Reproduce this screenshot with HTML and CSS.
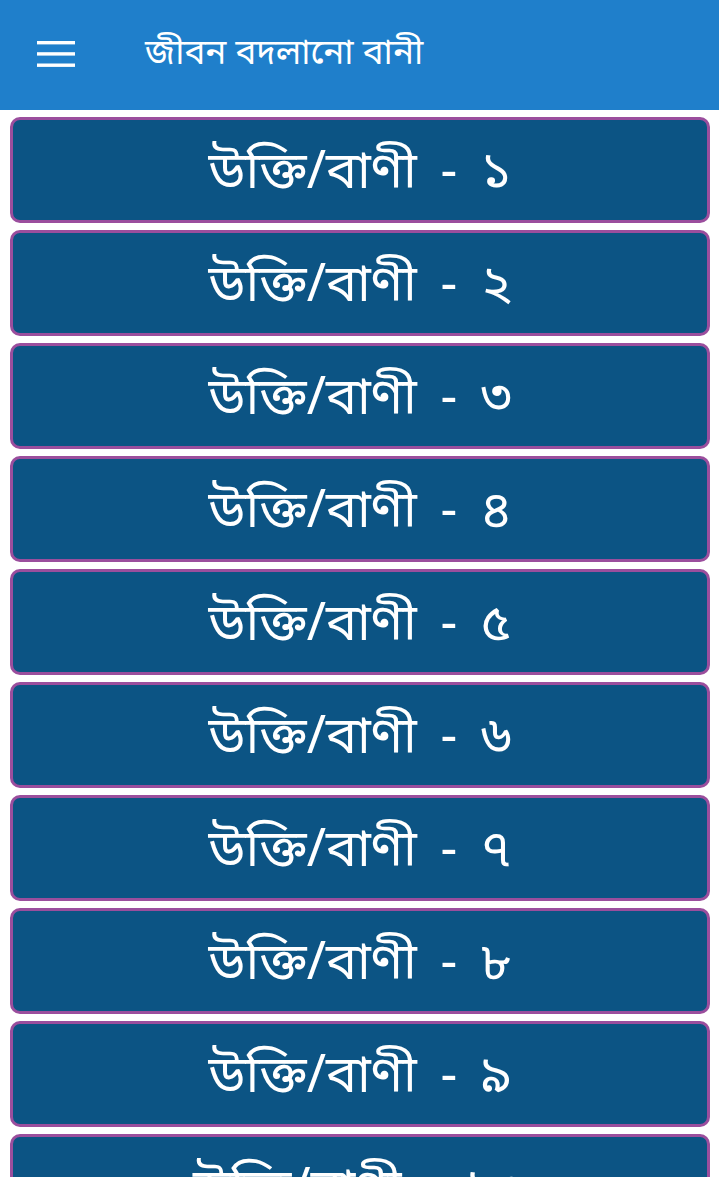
FILE: index.html
```html
<!DOCTYPE html>
<html lang="bn">
<head>
<meta charset="utf-8">
<title>জীবন বদলানো বানী</title>
<link rel="stylesheet" href="styles.css">
</head>
<body>
<header class="appbar">
  <button class="menu" aria-label="menu">
    <svg width="38" height="26" viewBox="0 0 38 26"><rect x="0" y="0" width="38" height="3.4" fill="#fff"/><rect x="0" y="11.2" width="38" height="3.4" fill="#fff"/><rect x="0" y="22.5" width="38" height="3.4" fill="#fff"/></svg>
  </button>
  <h1 class="title">জীবন বদলানো বানী</h1>
</header>
<main class="list">
  <a class="item">উক্তি/বাণী - ১</a>
  <a class="item">উক্তি/বাণী - ২</a>
  <a class="item">উক্তি/বাণী - ৩</a>
  <a class="item">উক্তি/বাণী - ৪</a>
  <a class="item">উক্তি/বাণী - ৫</a>
  <a class="item">উক্তি/বাণী - ৬</a>
  <a class="item">উক্তি/বাণী - ৭</a>
  <a class="item">উক্তি/বাণী - ৮</a>
  <a class="item">উক্তি/বাণী - ৯</a>
  <a class="item">উক্তি/বাণী - ১০</a>
</main>
</body>
</html>
```
FILE: styles.css
```css
html, body {
  margin: 0;
  padding: 0;
  background: #ffffff;
  overflow: hidden;
  height: 1177px;
}
body {
  font-family: "Noto Sans Bengali", "Lohit Bengali", "Noto Serif Bengali", "FreeSans", "Noto Sans", sans-serif;
}
.appbar {
  height: 110px;
  background: #1f7fcb;
  display: flex;
  align-items: center;
  box-sizing: border-box;
  padding-left: 37px;
}
.menu {
  border: 0;
  background: none;
  padding: 0;
  width: 38px;
  height: 26px;
  display: block;
  margin-top: -2px;
}
.menu svg { display: block; }
.title {
  margin: 0 0 0 70px;
  color: #fff;
  font-weight: normal;
  font-size: 35px;
}
.list {
  display: flex;
  flex-direction: column;
  gap: 7px;
  padding: 7px 9px 0 10px;
}
.item {
  height: 106px;
  box-sizing: border-box;
  border: 3.5px solid #9b4e9d;
  border-radius: 10px;
  background: #0c5484;
  color: #fff;
  display: flex;
  align-items: center;
  justify-content: center;
  font-size: 52px;
  word-spacing: 10px;
  padding-top: 8px;
  flex: none;
}
```
